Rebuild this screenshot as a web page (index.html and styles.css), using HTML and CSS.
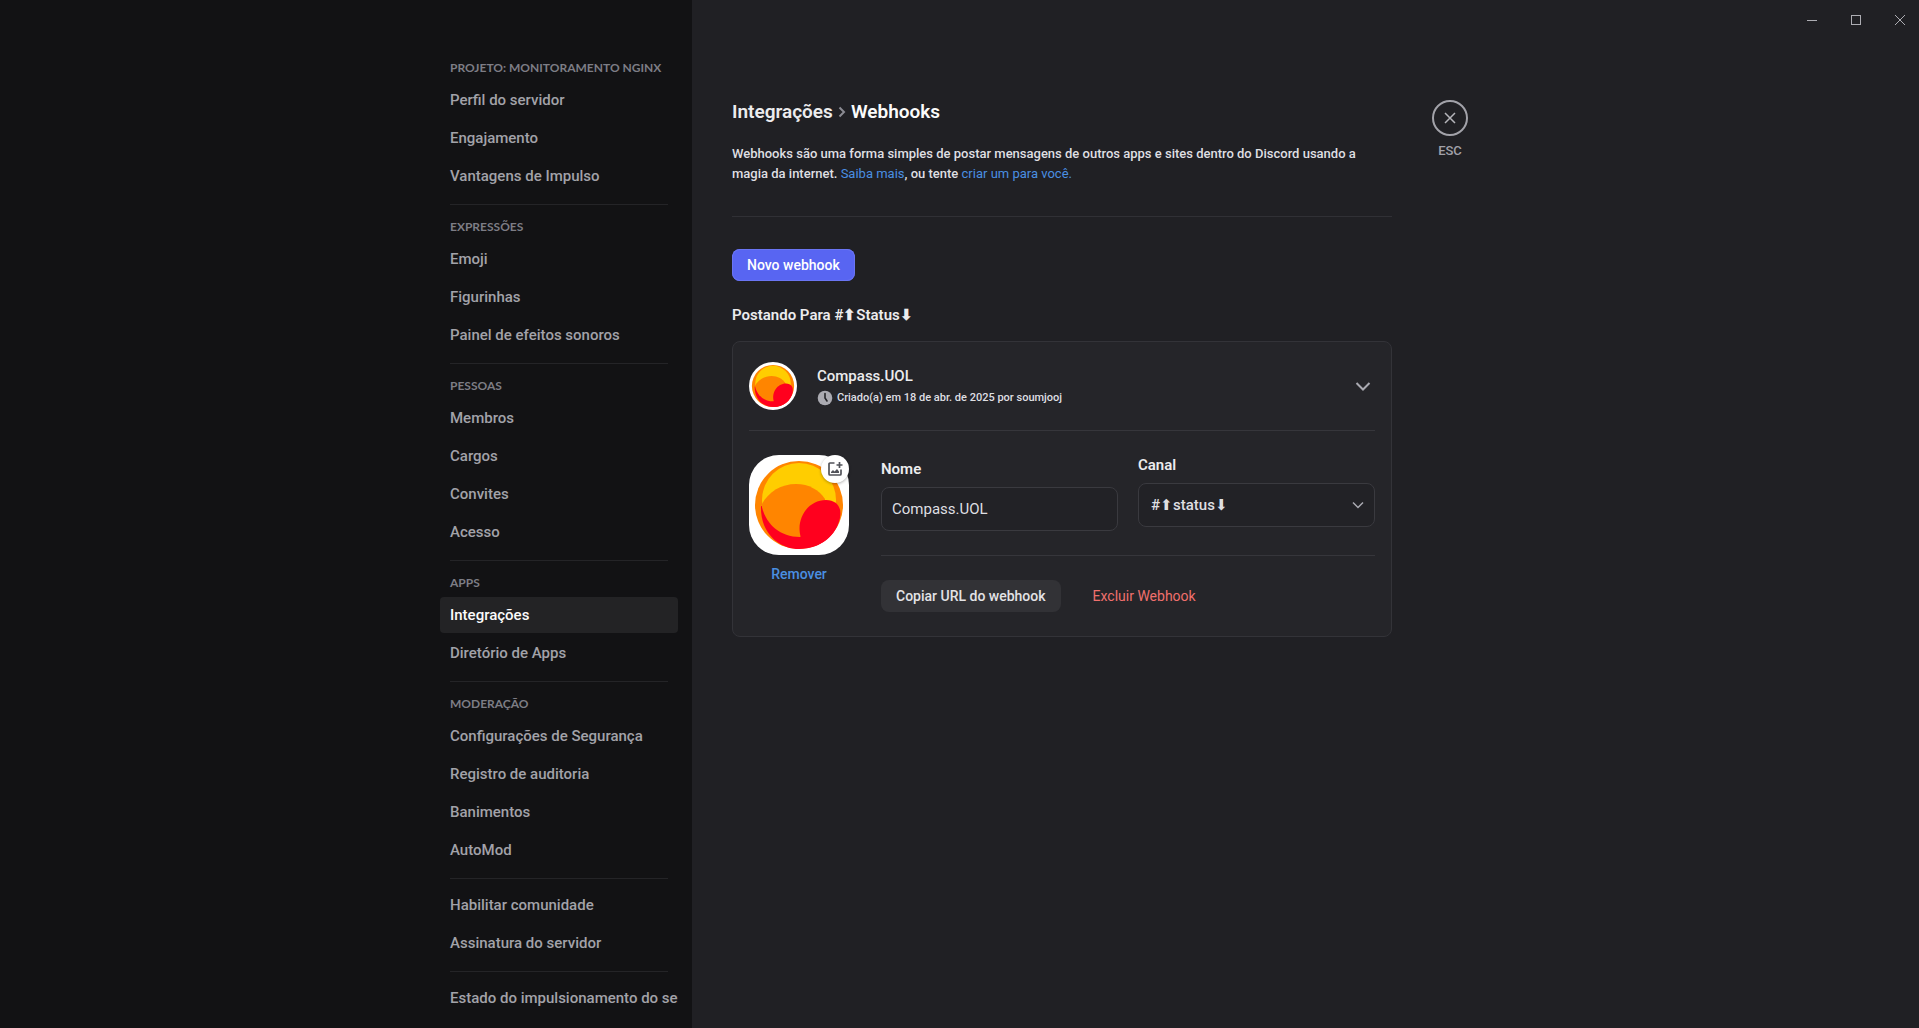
FILE: index.html
```html
<!DOCTYPE html>
<html lang="pt-BR">
<head>
<meta charset="utf-8">
<meta name="viewport" content="width=device-width, initial-scale=1">
<title>Webhooks</title>
<link rel="stylesheet" href="styles.css">
</head>
<body>
<svg class="defs" aria-hidden="true">
  <symbol id="logo" viewBox="0 0 100 100">
    <rect width="100" height="100" fill="#fff"/>
    <circle cx="50" cy="50" r="44" fill="#ff8500"/>
    <circle cx="50" cy="45" r="37" fill="#ffcd00"/>
    <path d="M12 51C11 78 30 94 50 94C72 94 88 80 91 62L70 50Z" fill="#ff001e"/>
    <path d="M12.500 50C19 37 32 29 47 29C60 29 70 35 76 44L76 70L51 82C30 82 16 68 12.500 50Z" fill="#ff8500"/>
    <path d="M52 83C46 64 59 45 77 45C88 45 93 53 91 62C86 83 70 93 52 93Z" fill="#ff001e"/>
  </symbol>
</svg>
<div class="app">
  <div class="side">
    <nav class="nav" aria-label="Configurações do servidor">
      <section class="group">
        <h2 class="group-title">Projeto: Monitoramento NGINX</h2>
        <a class="item" href="#">Perfil do servidor</a>
        <a class="item" href="#">Engajamento</a>
        <a class="item" href="#">Vantagens de Impulso</a>
      </section>
      <section class="group">
        <h2 class="group-title">Expressões</h2>
        <a class="item" href="#">Emoji</a>
        <a class="item" href="#">Figurinhas</a>
        <a class="item" href="#">Painel de efeitos sonoros</a>
      </section>
      <section class="group">
        <h2 class="group-title">Pessoas</h2>
        <a class="item" href="#">Membros</a>
        <a class="item" href="#">Cargos</a>
        <a class="item" href="#">Convites</a>
        <a class="item" href="#">Acesso</a>
      </section>
      <section class="group">
        <h2 class="group-title">Apps</h2>
        <a class="item selected" href="#" aria-current="page">Integrações</a>
        <a class="item" href="#">Diretório de Apps</a>
      </section>
      <section class="group">
        <h2 class="group-title">Moderação</h2>
        <a class="item" href="#">Configurações de Segurança</a>
        <a class="item" href="#">Registro de auditoria</a>
        <a class="item" href="#">Banimentos</a>
        <a class="item" href="#">AutoMod</a>
      </section>
      <section class="group">
        <a class="item" href="#">Habilitar comunidade</a>
        <a class="item" href="#">Assinatura do servidor</a>
      </section>
      <section class="group">
        <a class="item" href="#">Estado do impulsionamento do servidor</a>
      </section>
    </nav>
  </div>
  <div class="content">
    <header class="titlebar">
      <button class="win" aria-label="Minimizar"><svg width="10" height="10" viewBox="0 0 10 10"><path d="M0 5.500H10"/></svg></button>
      <button class="win" aria-label="Maximizar"><svg width="10" height="10" viewBox="0 0 10 10"><rect x=".5" y=".5" width="9" height="9"/></svg></button>
      <button class="win" aria-label="Fechar janela"><svg width="10" height="10" viewBox="0 0 10 10"><path d="M0 0L10 10M10 0L0 10"/></svg></button>
    </header>
    <div class="columns">
      <main class="page">
        <h1 class="crumbs">
          <a class="crumb" href="#">Integrações</a>
          <svg class="crumb-sep" width="10" height="16" viewBox="0 0 10 16"><path d="M2.500 3.500L7 8L2.500 12.500"/></svg>
          <span>Webhooks</span>
        </h1>
        <p class="intro">Webhooks são uma forma simples de postar mensagens de outros apps e sites dentro do Discord usando a magia da internet. <a class="link" href="#">Saiba mais</a>, ou tente <a class="link" href="#">criar um para você.</a></p>
        <hr class="rule">
        <button class="btn primary">Novo webhook</button>
        <h2 class="posting">Postando Para #⬆Status⬇</h2>
        <article class="card">
          <div class="card-head">
            <svg class="avatar" role="img" aria-label="Compass.UOL"><use href="#logo"/></svg>
            <div class="who">
              <h3 class="name">Compass.UOL</h3>
              <p class="created">
                <svg width="16" height="16" viewBox="0 0 16 16" aria-hidden="true"><circle cx="8" cy="8" r="7.300" fill="#aaaab1"/><path d="M8 3.500V8L10 11" fill="none" stroke="#252529" stroke-width="1.600" stroke-linecap="round"/></svg>
                Criado(a) em 18 de abr. de 2025 por soumjooj
              </p>
            </div>
            <button class="toggle" aria-label="Recolher"><svg width="24" height="24" viewBox="0 0 24 24"><path d="M5.500 9L12 15.500L18.500 9"/></svg></button>
          </div>
          <div class="card-body">
            <div class="icon-col">
              <div class="icon-box">
                <svg class="icon-large" role="img" aria-label="Ícone do webhook"><use href="#logo"/></svg>
                <button class="upload" aria-label="Enviar imagem">
                  <svg width="16" height="16" viewBox="0 0 16 16"><path d="M7.500 2H3Q2 2 2 3V13Q2 14 3 14H13Q14 14 14 13V8.500" fill="none" stroke="#52535a" stroke-width="1.700"/><path d="M12.500 1V7M9.500 4H15.500" stroke="#52535a" stroke-width="1.700"/><path d="M4 12V11L6 9L7.500 10.500L10 8L12 10.500V12Z" fill="#52535a"/></svg>
                </button>
              </div>
              <button class="remove">Remover</button>
            </div>
            <div class="form">
              <div class="fields">
                <div class="field field-name">
                  <label class="label" for="name">Nome</label>
                  <input class="control" id="name" type="text" value="Compass.UOL">
                </div>
                <div class="field">
                  <label class="label" for="channel">Canal</label>
                  <div class="select-wrap">
                    <select class="control select" id="channel"><option>#⬆status⬇</option></select>
                    <svg class="caret" width="18" height="18" viewBox="0 0 18 18" aria-hidden="true"><path d="M4 6.500L9 11.500L14 6.500"/></svg>
                  </div>
                </div>
              </div>
              <div class="actions">
                <button class="btn secondary">Copiar URL do webhook</button>
                <button class="btn danger">Excluir Webhook</button>
              </div>
            </div>
          </div>
        </article>
      </main>
      <div class="close-col">
        <button class="close" aria-label="Fechar"><svg width="18" height="18" viewBox="0 0 18 18"><path d="M4 4L14 14M14 4L4 14"/></svg></button>
        <div class="esc">ESC</div>
      </div>
    </div>
  </div>
</div>
</body>
</html>
```
FILE: styles.css
```css
* { box-sizing: border-box; }

body {
  margin: 0;
  background: #202024;
  color: #ececee;
  font-family: Roboto, "Liberation Sans", sans-serif;
  font-size: 13px;
  font-weight: 500;
  line-height: 20px;
}

h1, h2, h3, p { margin: 0; }
a { color: inherit; text-decoration: none; }

button {
  padding: 0;
  border: 0;
  background: none;
  color: inherit;
  font: inherit;
}

svg { display: block; flex: none; }
.defs { position: absolute; width: 0; height: 0; }

.app {
  display: flex;
  height: 100vh;
  overflow: hidden;
}

/* Sidebar */
.side {
  flex: 1 0 242px;
  display: flex;
  justify-content: flex-end;
  padding: 54px 14px 0 0;
  background: #121214;
}

.nav { width: 238px; }
.group { display: flow-root; }

.group + .group::before {
  content: "";
  display: block;
  height: 1px;
  margin: 8px 10px;
  background: #242427;
}

.group-title {
  padding: 0 10px;
  color: #7d7d85;
  font-family: Lato, sans-serif;
  font-size: 12px;
  font-weight: 700;
  line-height: 28px;
  text-transform: uppercase;
}

.item {
  display: block;
  height: 36px;
  margin-bottom: 2px;
  padding: 0 0 0 10px;
  border-radius: 4px;
  color: #a2a2a9;
  font-size: 15px;
  line-height: 36px;
  white-space: nowrap;
  overflow: hidden;
}

.item.selected {
  background: #232325;
  color: #fbfbfb;
}

/* Content */
.content { flex: 1 1 777px; min-width: 0; }

.titlebar {
  display: flex;
  justify-content: flex-end;
  height: 40px;
  padding-right: 14px;
  gap: 34px;
}

.win svg { fill: none; stroke: #adadb3; }

.columns {
  display: flex;
  gap: 40px;
  padding: 60px 40px 0;
}

.page { flex: 0 1 660px; }

.crumbs {
  display: flex;
  align-items: center;
  gap: 4px;
  font-size: 19px;
  font-weight: 600;
  line-height: 24px;
  color: #fbfbfb;
}

.crumb { color: #ececee; }
.crumb-sep { fill: none; stroke: #8b8b93; stroke-width: 2; }
.intro { margin-top: 20px; color: #dfdfe2; }
.link { color: #4a8fe2; font-weight: 400; }

.rule {
  height: 1px;
  margin: 32px 0;
  border: 0;
  background: #303035;
}

.btn {
  height: 32px;
  padding: 0 15px;
  border-radius: 8px;
  font-size: 14px;
  line-height: 20px;
  white-space: nowrap;
}

.primary { background: #5865f2; box-shadow: inset 0 0 0 1px #6a75f3; color: #fff; }
.secondary { background: #323236; color: #e3e3e6; }
.danger { color: #f0706d; font-weight: 400; }

.posting {
  margin: 24px 0 16px;
  font-size: 15px;
  font-weight: 600;
  line-height: 20px;
}

.card {
  padding: 20px 16px 24px;
  border: 1px solid #333338;
  border-radius: 8px;
  background: #252529;
}

.card-head {
  display: flex;
  align-items: center;
  padding-bottom: 20px;
  border-bottom: 1px solid #36363b;
}

.avatar { width: 48px; height: 48px; border-radius: 50%; }
.who { flex: 1; margin-left: 20px; }
.name { font-size: 15px; font-weight: 500; line-height: 24px; }

.created {
  display: flex;
  align-items: center;
  gap: 4px;
  font-size: 11px;
  color: #dfdfe2;
}

.toggle svg { fill: none; stroke: #aaaab1; stroke-width: 2; }

.card-body { display: flex; gap: 32px; padding-top: 24px; }
.icon-col { width: 100px; text-align: center; }
.icon-box { position: relative; height: 100px; }
.icon-large { width: 100px; height: 100px; border-radius: 30px; }

.upload {
  position: absolute;
  top: 0;
  right: 0;
  display: grid;
  place-items: center;
  width: 28px;
  height: 28px;
  border-radius: 50%;
  background: #fff;
  box-shadow: 0 1px 3px rgb(0 0 0 / 30%);
}

.remove { margin-top: 9px; color: #4a8fe2; font-size: 14px; }

.form { flex: 1; min-width: 0; }

.fields {
  display: flex;
  gap: 20px;
  padding-bottom: 24px;
  border-bottom: 1px solid #36363b;
}

.field { flex: 1; min-width: 0; }
.field-name { padding-top: 4px; }
.label { display: block; margin-bottom: 8px; font-size: 15px; font-weight: 600; line-height: 20px; }

.control {
  display: block;
  width: 100%;
  height: 44px;
  padding: 0 10px;
  border: 1px solid #3a3a3f;
  border-radius: 8px;
  background: #222226;
  color: #dfdfe2;
  font: inherit;
  font-size: 15px;
  font-weight: 400;
}

.select-wrap { position: relative; }
.select { appearance: none; padding: 0 12px; font-weight: 500; }

.caret {
  position: absolute;
  top: 13px;
  right: 8px;
  fill: none;
  stroke: #aaaab1;
  stroke-width: 1.500;
  pointer-events: none;
}

.actions { display: flex; gap: 17px; padding-top: 24px; }

.close-col { text-align: center; color: #a2a2a9; }

.close {
  display: grid;
  place-items: center;
  width: 36px;
  height: 36px;
  border: 2px solid #a2a2a9;
  border-radius: 50%;
}

.close svg { fill: none; stroke: #b5b5ba; stroke-width: 1.500; }
.esc { margin-top: 5px; font-weight: 500; }
```
